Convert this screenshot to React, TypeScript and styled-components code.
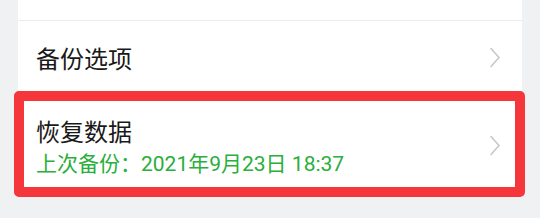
import styled, { createGlobalStyle } from "styled-components";

const GlobalStyle = createGlobalStyle`
  html, body {
    margin: 0;
    padding: 0;
    background: #f0f1f3;
    font-family: Roboto, "Noto Sans CJK SC", sans-serif;
  }
`;

const Page = styled.div`
  width: 540px;
  height: 218px;
  overflow: hidden;
  padding: 0 18px;
  box-sizing: border-box;
`;

const Card = styled.div`
  background: #fff;
  padding-top: 20px;
`;

const Row = styled.div<{ $height: number; $divider?: boolean }>`
  position: relative;
  height: ${(p) => p.$height}px;
  display: flex;
  align-items: center;
  padding: 0 21px 0 18px;
  box-sizing: border-box;
  border-top: ${(p) => (p.$divider ? "1px solid #ececec" : "none")};
`;

const Texts = styled.div`
  flex: 1;
  display: flex;
  flex-direction: column;
  padding-top: 6px;
`;

const Title = styled.div`
  font-size: 24px;
  line-height: 32px;
  color: #191919;
`;

const Sub = styled.div`
  font-size: 21px;
  line-height: 30px;
  color: #2aae3c;
`;

const Highlight = styled.div`
  position: absolute;
  top: -2px;
  left: -4px;
  right: -3px;
  bottom: 0;
  border: 10px solid #f5363a;
  border-radius: 5px;
  pointer-events: none;
`;

const Chevron = () => (
  <svg width="12" height="21" viewBox="0 0 12 21">
    <path d="M2 1.5 L10 10.5 L2 19.5" fill="none" stroke="#c8c8c8" strokeWidth="1.6" strokeLinecap="round" strokeLinejoin="round" />
  </svg>
);

export default function App() {
  return (
    <>
      <GlobalStyle />
      <Page>
        <Card>
          <Row $height={73} $divider>
            <Texts>
              <Title>备份选项</Title>
            </Texts>
            <Chevron />
          </Row>
          <Row $height={104}>
            <Texts>
              <Title>恢复数据</Title>
              <Sub>上次备份：2021年9月23日 18:37</Sub>
            </Texts>
            <Chevron />
            <Highlight />
          </Row>
        </Card>
      </Page>
    </>
  );
}
